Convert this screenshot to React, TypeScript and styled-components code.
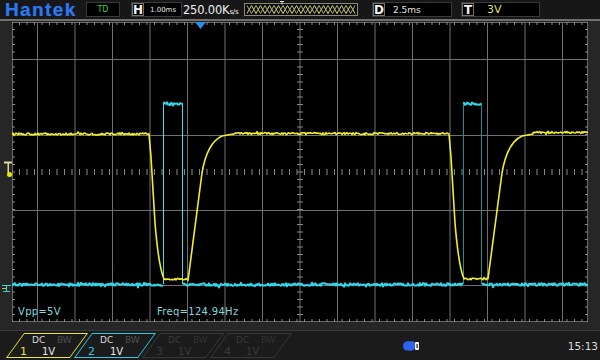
import React from "react"
import styled, { createGlobalStyle } from "styled-components"

type Channel = {
  id: number
  color: string
  active: boolean
}

const channels: Channel[] = [
  { id: 1, color: "#e8e830", active: true },
  { id: 2, color: "#2fc8e0", active: true },
  { id: 3, color: "#383838", active: false },
  { id: 4, color: "#383838", active: false },
]

// seeded jitter so the noisy traces stay the same on every render
const makeRandom = (seed: number) => {
  let s = seed
  return () => {
    s = (s * 16807) % 2147483647
    return s / 2147483647
  }
}
const rand = makeRandom(7919)

const jitter = (x0: number, x1: number, y: number, amp: number, step = 1) => {
  let d = ""
  for (let x = x0; x <= x1; x += step) {
    const spike = rand() > 0.92 ? (rand() - 0.5) * amp * 3 : 0
    d += ` L${x.toFixed(1)} ${(y + (rand() - 0.5) * amp * 2 + spike).toFixed(1)}`
  }
  return d
}

const yellowPulse = (o: number) =>
  ` L${149 + o} 134 L${151 + o} 157 L${155 + o} 223 C${157 + o} 247 ${160 + o} 270 ${164 + o} 279` +
  jitter(164 + o, 188 + o, 279, 0.9) +
  ` L${202 + o} 173 C${205 + o} 155 ${211 + o} 141 ${222 + o} 136 L${233 + o} 134`

const yellowPath =
  "M12 134" +
  jitter(12, 149, 134, 1) +
  yellowPulse(0) +
  jitter(233, 449, 133.5, 1) +
  yellowPulse(300) +
  jitter(533, 588, 132.5, 1)

const cyanFlats =
  "M12 284.5" +
  jitter(12, 163, 284.5, 1.3) +
  " M164 103.5" +
  jitter(164, 182, 103.5, 1.3) +
  " M183 284.5" +
  jitter(183, 463, 284.5, 1.3) +
  " M464 103.5" +
  jitter(464, 481, 103.5, 1.3) +
  " M482 284.5" +
  jitter(482, 588, 284.5, 1.3)

const verticals = Array.from({ length: 15 }, (_, i) => 37.5 * (i + 1))
const horizontals = [59.5, 135.5, 210.5, 285.5]
const ticksX = Array.from({ length: 77 }, (_, i) => 12 + i * 7.5)
const ticksY = Array.from({ length: 41 }, (_, i) => 22 + i * 7.5)

const tickPath =
  ticksX.map((x) => `M${x} 22v3M${x} 322v-3M${x} 169v6`).join("") +
  ticksY.map((y) => `M12 ${y}h3M588 ${y}h-3M297 ${y}h6`).join("")

const zigzag = (flip: boolean) =>
  Array.from({ length: 25 }, (_, i) => `${3 + i * 4.5},${(i % 2 === 0) !== flip ? 12.5 : 4.5}`).join(" ")

export default function App() {
  return (
    <>
      <GlobalStyle />
      <Screen>
        {/* Status bar */}
        <TopBar>
          <Logo>{"Hantek"}</Logo>
          <InfoBox $width={34} $gap={5} $center>
            <ModeText>{"TD"}</ModeText>
          </InfoBox>
          <InfoBox $width={51} $gap={11}>
            <KeyLetter>{"H"}</KeyLetter>
            <BoxValue $indent={6} $size={7}>{"1.00ms"}</BoxValue>
          </InfoBox>
          <Rate>
            {"250.00K"}
            <Unit>{"s/s"}</Unit>
          </Rate>
          <Overview width="114" height="17" viewBox="0 0 114 17">
            <rect x="0.5" y="2.5" width="113" height="12" fill="#0b0b12" stroke="#8a8a72" />
            <polyline points={zigzag(false)} fill="none" stroke="#d8d850" strokeWidth="1" />
            <polyline points={zigzag(true)} fill="none" stroke="#a8a890" strokeWidth="1" />
            <path d="M36 0.5h4M38 0.5v3" stroke="#e0e0e0" strokeWidth="1" />
          </Overview>
          <InfoBox $width={80} $gap={14}>
            <KeyLetter>{"D"}</KeyLetter>
            <BoxValue $indent={8} $size={9}>{"2.5ms"}</BoxValue>
          </InfoBox>
          <InfoBox $width={79} $gap={9}>
            <KeyLetter>{"T"}</KeyLetter>
            <BoxValue $indent={13} $size={11} $color="#dede78">
              {"3V"}
            </BoxValue>
          </InfoBox>
        </TopBar>
        <Divider />

        {/* Waveform area */}
        <Middle>
          <Gutter>
            <svg width="12" height="309" viewBox="0 21 12 309">
              <rect x="4" y="161.5" width="8" height="2" fill="#dcdc98" />
              <rect x="7.5" y="162" width="1.5" height="11" fill="#dcdc98" />
              <circle cx="9.5" cy="174.5" r="2.5" fill="#e8e800" />
              <path d="M2 285.5h9M6.5 285v6M3 291.5h7" stroke="#38d0c8" strokeWidth="1.2" fill="none" />
              <path d="M2 288.5h4" stroke="#c8c840" strokeWidth="1" />
            </svg>
          </Gutter>
          <Plot>
            <Graticule width="576" height="300" viewBox="12 22 576 300">
              <rect x="12" y="22" width="576" height="300" fill="#000" />
              {verticals.map((x) => (
                <line key={`v${x}`} x1={x} y1="22" x2={x} y2="322" stroke="#707070" strokeWidth="1" />
              ))}
              {horizontals.map((y) => (
                <line key={`h${y}`} x1="12" y1={y} x2="588" y2={y} stroke="#707070" strokeWidth="1" />
              ))}
              <rect x="12.5" y="22.5" width="575" height="299" fill="none" stroke="#686868" />
              <path d={tickPath} stroke="#8a8a8a" strokeWidth="1" fill="none" />

              {/* CH2 */}
              <path d="M163.5 284V103M182.5 284V103" stroke="#40e0f0" strokeWidth="1" />
              <path d="M463.5 284V103M481.5 284V103" stroke="#1f8f8f" strokeWidth="1" />
              <path d={cyanFlats} stroke="#2fd8ea" strokeWidth="2" fill="none" strokeLinejoin="round" />

              {/* CH1 */}
              <path d={yellowPath} stroke="#f0f028" strokeWidth="1.6" fill="none" strokeLinejoin="round" />

              {/* trigger position */}
              <polygon points="195,22 206,22 200.5,29" fill="#2b8ee8" />
            </Graticule>
            <Readouts>
              <Readout>{"Vpp=5V"}</Readout>
              <Readout>{"Freq=124.94Hz"}</Readout>
            </Readouts>
          </Plot>
          <Gutter />
        </Middle>

        {/* Channel bar */}
        <BottomBar>
          {channels.map((ch) => (
            <Tab key={ch.id} $color={ch.color}>
              <TabBody>
                <TabRow $indent={16}>
                  <TabText $width={25} $color={ch.active ? "#d8d8d8" : "#3c3c3c"}>{"DC"}</TabText>
                  <TabText $color={ch.active ? "#505050" : "#333"}>{"BW"}</TabText>
                </TabRow>
                <TabRow $indent={4}>
                  <TabNumber $width={22} $color={ch.active ? ch.color : "#3a3a3a"}>{ch.id}</TabNumber>
                  <TabText $size={10} $color={ch.active ? "#e8e8e8" : "#3c3c3c"}>{"1V"}</TabText>
                </TabRow>
              </TabBody>
            </Tab>
          ))}
          <UsbIcon width="18" height="12" viewBox="0 0 18 12">
            <path d="M1 6C1 2 4 0.5 8 1.5C11 0.5 14 2 13.5 5.5C14 9.5 10 11.5 6 10.5C3 11 1 9 1 6Z" fill="#2e63f0" />
            <rect x="13" y="2" width="4" height="8" rx="1" fill="#f0f0f0" />
            <rect x="14.5" y="4" width="1.2" height="4" fill="#1c1c1c" />
          </UsbIcon>
          <Clock>{"15:13"}</Clock>
        </BottomBar>
      </Screen>
    </>
  )
}

/**
 * Styled components
 */

const GlobalStyle = createGlobalStyle`
  html, body {
    margin: 0;
    padding: 0;
    background: #1c1c1c;
  }
  body {
    width: 600px;
    height: 360px;
    overflow: hidden;
    font-family: "DejaVu Sans", sans-serif;
  }
`

const Screen = styled("div")`
  display: flex;
  flex-direction: column;
  width: 600px;
  height: 360px;
  background: #262626;
`

const TopBar = styled("header")`
  display: flex;
  align-items: center;
  height: 19px;
  padding-left: 5px;
  background: #171717;
  box-sizing: border-box;
`

const Logo = styled("div")`
  width: 76px;
  flex: none;
  font-family: "Liberation Sans", Arial, sans-serif;
  font-weight: 700;
  font-size: 19px;
  line-height: 19px;
  letter-spacing: 1.4px;
  color: #2e78ec;
  text-shadow: 0 0 1px #1848b0;
  white-space: nowrap;
`

const InfoBox = styled("div")<{ $width: number; $gap: number; $center?: boolean }>`
  display: flex;
  align-items: center;
  justify-content: ${(p) => (p.$center ? "center" : "flex-start")};
  box-sizing: border-box;
  width: ${(p) => p.$width}px;
  height: 15px;
  margin-left: ${(p) => p.$gap}px;
  background: #000;
  border: 1px solid #3a3a3a;
`

const ModeText = styled("span")`
  font-size: 8px;
  color: #3ccc3c;
`

const KeyLetter = styled("span")`
  display: flex;
  align-items: center;
  justify-content: center;
  box-sizing: border-box;
  width: 12px;
  height: 13px;
  border: 1px solid #707070;
  color: #f2f2f2;
  font-size: 12px;
  font-weight: 700;
`

const BoxValue = styled("span")<{ $indent: number; $size: number; $color?: string }>`
  margin-left: ${(p) => p.$indent}px;
  font-size: ${(p) => p.$size}px;
  color: ${(p) => p.$color ?? "#e4e4e4"};
  white-space: nowrap;
`

const Rate = styled("div")`
  width: 61px;
  margin-left: 1px;
  font-size: 11.5px;
  color: #f0f0f0;
  white-space: nowrap;
  letter-spacing: -0.2px;
`

const Unit = styled("span")`
  font-size: 7px;
`

const Overview = styled("svg")`
  display: block;
  flex: none;
`

const Divider = styled("div")`
  height: 2px;
  background: #707070;
`

const Middle = styled("main")`
  display: flex;
  height: 309px;
`

const Gutter = styled("div")`
  width: 12px;
  flex: none;
  svg {
    display: block;
  }
`

const Plot = styled("div")`
  display: grid;
  width: 576px;
  height: 300px;
  margin-top: 1px;
  flex: none;
  > * {
    grid-area: 1 / 1;
  }
`

const Graticule = styled("svg")`
  display: block;
`

const Readouts = styled("div")`
  display: grid;
  grid-template-columns: 139px auto;
  align-self: end;
  padding: 0 0 5px 6px;
`

const Readout = styled("span")`
  font-size: 10px;
  color: #82d6de;
  letter-spacing: 0.3px;
`

const BottomBar = styled("footer")`
  display: flex;
  align-items: center;
  height: 30px;
  box-sizing: border-box;
  padding: 0 2px 0 15px;
  border-top: 1px solid #3a3a3a;
  background: #1b1b1b;
`

const Tab = styled("div")<{ $color: string }>`
  flex: none;
  box-sizing: border-box;
  width: 64px;
  height: 25px;
  margin-right: 4px;
  border: 1px solid ${(p) => p.$color};
  transform: skewX(-36deg);
`

const TabBody = styled("div")`
  display: flex;
  flex-direction: column;
  height: 100%;
  transform: skewX(36deg);
`

const TabRow = styled("div")<{ $indent: number }>`
  display: flex;
  align-items: center;
  height: 11.5px;
  padding-left: ${(p) => p.$indent}px;
`

const TabText = styled("span")<{ $color: string; $width?: number; $size?: number }>`
  width: ${(p) => (p.$width ? `${p.$width}px` : "auto")};
  font-size: ${(p) => p.$size ?? 9}px;
  color: ${(p) => p.$color};
  white-space: nowrap;
`

const TabNumber = styled("span")<{ $color: string; $width: number }>`
  width: ${(p) => p.$width}px;
  font-size: 11px;
  color: ${(p) => p.$color};
`

const UsbIcon = styled("svg")`
  display: block;
  flex: none;
  margin-left: 115px;
`

const Clock = styled("span")`
  margin-left: auto;
  font-size: 10.5px;
  color: #dcdcdc;
`
